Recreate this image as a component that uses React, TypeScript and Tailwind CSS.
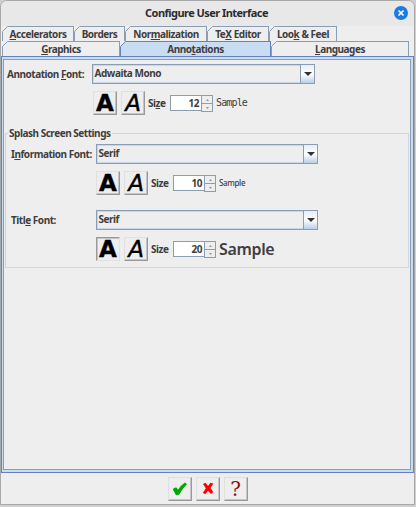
import React from "react";

function Hot({ text, at = -1 }: { text: string; at?: number }) {
  if (at < 0) return <>{text}</>;
  return (
    <>
      {text.slice(0, at)}
      <span className="underline decoration-1 underline-offset-[1px]">{text[at]}</span>
      {text.slice(at + 1)}
    </>
  );
}

function Tab({ text, at, width, active }: { text: string; at?: number; width: string; active?: boolean }) {
  return (
    <div
      className={`relative flex h-[15px] shrink-0 items-center justify-center border-t border-r ${width} ${
        active ? "border-[#6382bf] bg-[#c8ddf2]" : "border-[#8b9db3] bg-[#eeeeee]"
      }`}
    >
      <svg className="absolute -top-px left-0 h-[15px] w-[6px]" viewBox="0 0 6 15">
        <path d="M0 0H6L0 6Z" fill="#eeeeee" />
        <path d="M.5 15V5.5L5.5 .5" fill="none" stroke={active ? "#6382bf" : "#8b9db3"} />
      </svg>
      <span className="pl-px whitespace-nowrap">
        <Hot text={text} at={at} />
      </span>
    </div>
  );
}

function Combo({ value, width = "w-[222px]" }: { value: string; width?: string }) {
  return (
    <div className={`flex h-[20px] border border-[#8b9db3] bg-[#eeeeee] shadow-[inset_0_0_0_1px_#c8d8e8] ${width}`}>
      <span className="flex-1 pl-[1.5px] leading-[17px]">{value}</span>
      <div className="flex w-[14px] items-center justify-center border-l border-[#8b9db3] bg-gradient-to-b from-[#e4eef8] via-white to-[#b8cfe5]">
        <svg className="h-[4px] w-[8px]" viewBox="0 0 8 4">
          <path d="M0 0H8L4 4Z" fill="#333333" />
        </svg>
      </div>
    </div>
  );
}

function Key({ children, pressed }: { children: React.ReactNode; pressed?: boolean }) {
  return (
    <button
      className={`flex size-[24px] shrink-0 items-center justify-center border bg-[#eeeeee] ${
        pressed
          ? "border-t-[#999999] border-r-[#e2e2e2] border-b-[#e2e2e2] border-l-[#999999] shadow-[inset_1px_1px_0_#c4c4c4]"
          : "border-t-[#e0e0e0] border-r-[#999999] border-b-[#999999] border-l-[#e0e0e0] shadow-[inset_-1px_-1px_0_#c4c4c4]"
      }`}
    >
      {children}
    </button>
  );
}

function Spinner({ value }: { value: number }) {
  return (
    <div className="flex h-[16px] w-[43px]">
      <div className="h-[16px] w-[31px] border border-r-0 border-[#8b9db3] bg-white pr-[2px] text-right leading-[15px]">{value}</div>
      <div className="flex h-[17px] w-[12px] flex-col border border-[#8b9db3]">
        {[0, 1].map((i) => (
          <div key={i} className={`flex flex-1 items-center justify-center ${i ? "border-t border-[#8b9db3]" : ""}`}>
            <svg className="h-[2px] w-[3px]" viewBox="0 0 3 2">
              <path d={i ? "M0 0H3L1.5 2Z" : "M0 2H3L1.5 0Z"} fill="#8a95a5" />
            </svg>
          </div>
        ))}
      </div>
    </div>
  );
}

function Style({ size, at, bold, children }: { size: number; at?: number; bold?: boolean; children: React.ReactNode }) {
  return (
    <div className="flex h-[24px] items-center">
      <Key pressed={bold}>
        <span className="font-['DejaVu_Sans'] text-[23px] leading-none font-bold tracking-normal text-black [-webkit-text-stroke:0.4px_black]">A</span>
      </Key>
      <div className="w-[4px]" />
      <Key>
        <span className="font-['DejaVu_Sans'] text-[23px] leading-none font-normal tracking-normal text-black italic [-webkit-text-stroke:0.4px_black]">A</span>
      </Key>
      <span className="ml-[3px] w-[22px]">
        <Hot text="Size" at={at} />
      </span>
      <Spinner value={size} />
      {children}
    </div>
  );
}

export default function App() {
  return (
    <div className="h-[507px] w-[416px] bg-[#cfcfcf] font-['Noto_Sans',sans-serif] text-[10px] leading-[14px] font-bold tracking-[-0.47px] text-[#3e3e3e]">
      <div className="flex h-[505px] w-[415px] flex-col overflow-hidden rounded-t-[7px] border border-[#a8a8a8] bg-[#eeeeee]">
        <header className="flex h-[25px] shrink-0 items-center bg-[#e8e8e8] pr-[6px] pb-[2px] pl-[18px]">
          <span className="flex-1 text-center text-[11px] tracking-[-0.54px] text-[#2c2c2c]">Configure User Interface</span>
          <svg className="h-[14px] w-[14px]" viewBox="0 0 14 14">
            <circle cx="7" cy="7" r="7" fill="#1a7ce0" />
            <path d="M4.5 4.5L9.5 9.5M9.5 4.5L4.5 9.5" stroke="white" strokeWidth="1.7" />
          </svg>
        </header>
        <nav className="flex h-[15px] shrink-0 pl-px">
          <Tab text="Accelerators" at={0} width="w-[72px]" />
          <Tab text="Borders" width="w-[51px]" />
          <Tab text="Normalization" at={3} width="w-[82px]" />
          <Tab text="TeX Editor" at={2} width="w-[62px]" />
          <Tab text="Look & Feel" at={3} width="w-[68px]" />
        </nav>
        <nav className="flex h-[15px] shrink-0 pl-px">
          <Tab text="Graphics" at={0} width="w-[118px]" />
          <Tab text="Annotations" at={4} width="w-[151px]" active />
          <Tab text="Languages" at={0} width="w-[138px]" />
        </nav>
        <main className="h-[417px] w-[413px] shrink-0 border border-[#6382bf] bg-[#c8ddf2] p-[2px] pl-px">
          <div className="flex h-full flex-col border border-[#8b9db3] bg-[#eeeeee] pt-[4px]">
            <div className="flex h-[19px] items-center pl-[3px] whitespace-nowrap">
              <span className="w-[85px]"><Hot text="Annotation Font:" at={11} /></span>
              <Combo value="Adwaita Mono" width="w-[223px]" />
            </div>
            <div className="mt-[8px] pl-[89px]">
              <Style size={12} at={2}>
                <span className="ml-[3px] font-['DejaVu_Sans_Mono'] text-[10px] leading-none font-normal tracking-[-0.85px]">Sample</span>
              </Style>
            </div>
            <fieldset className="mt-[11px] ml-px h-[142px] w-[404px] border border-[#c8d8e8] pl-[2px]">
              <legend className="px-[1px]">Splash Screen Settings</legend>
              <div className="mt-[4px] flex h-[19px] items-center pl-[3px] whitespace-nowrap">
                <span className="w-[85px]"><Hot text="Information Font:" at={1} /></span>
                <Combo value="Serif" />
              </div>
              <div className="mt-[8px] pl-[88px]">
                <Style size={10}>
                  <span className="ml-[3px] text-[8px] font-medium tracking-[-0.35px]">Sample</span>
                </Style>
              </div>
              <div className="mt-[15px] flex h-[19px] items-center pl-[3px] whitespace-nowrap">
                <span className="w-[85px]"><Hot text="Title Font:" at={4} /></span>
                <Combo value="Serif" />
              </div>
              <div className="mt-[8px] pl-[88px]">
                <Style size={20} bold>
                  <span className="ml-[3px] text-[16px] font-semibold tracking-[-0.35px]">Sample</span>
                </Style>
              </div>
            </fieldset>
          </div>
        </main>
        <footer className="flex flex-1 items-center justify-center gap-[4px]">
          <Key>
            <svg className="h-[14px] w-[16px]" viewBox="0 0 16 14"><path d="M.8 7.3Q2.5 5 4.8 5.8L6 7.8Q9 3 13 .5L15 2.2Q10.5 6.5 7 12.8L4 13.2Z" fill="#00a800" /></svg>
          </Key>
          <Key>
            <svg className="h-[13px] w-[12px]" viewBox="0 0 12 13"><path d="M1 2L3.5 .7L6 4L8.5 .8L11.3 1.5L8.5 6L11.3 10L9 12L6 8.7L3.5 12L.8 11L3.8 6.3Z" fill="#ff0000" /></svg>
          </Key>
          <Key>
            <span className="font-['DejaVu_Serif'] text-[20px] leading-none font-normal text-[#8b1010]">?</span>
          </Key>
        </footer>
      </div>
    </div>
  );
}
